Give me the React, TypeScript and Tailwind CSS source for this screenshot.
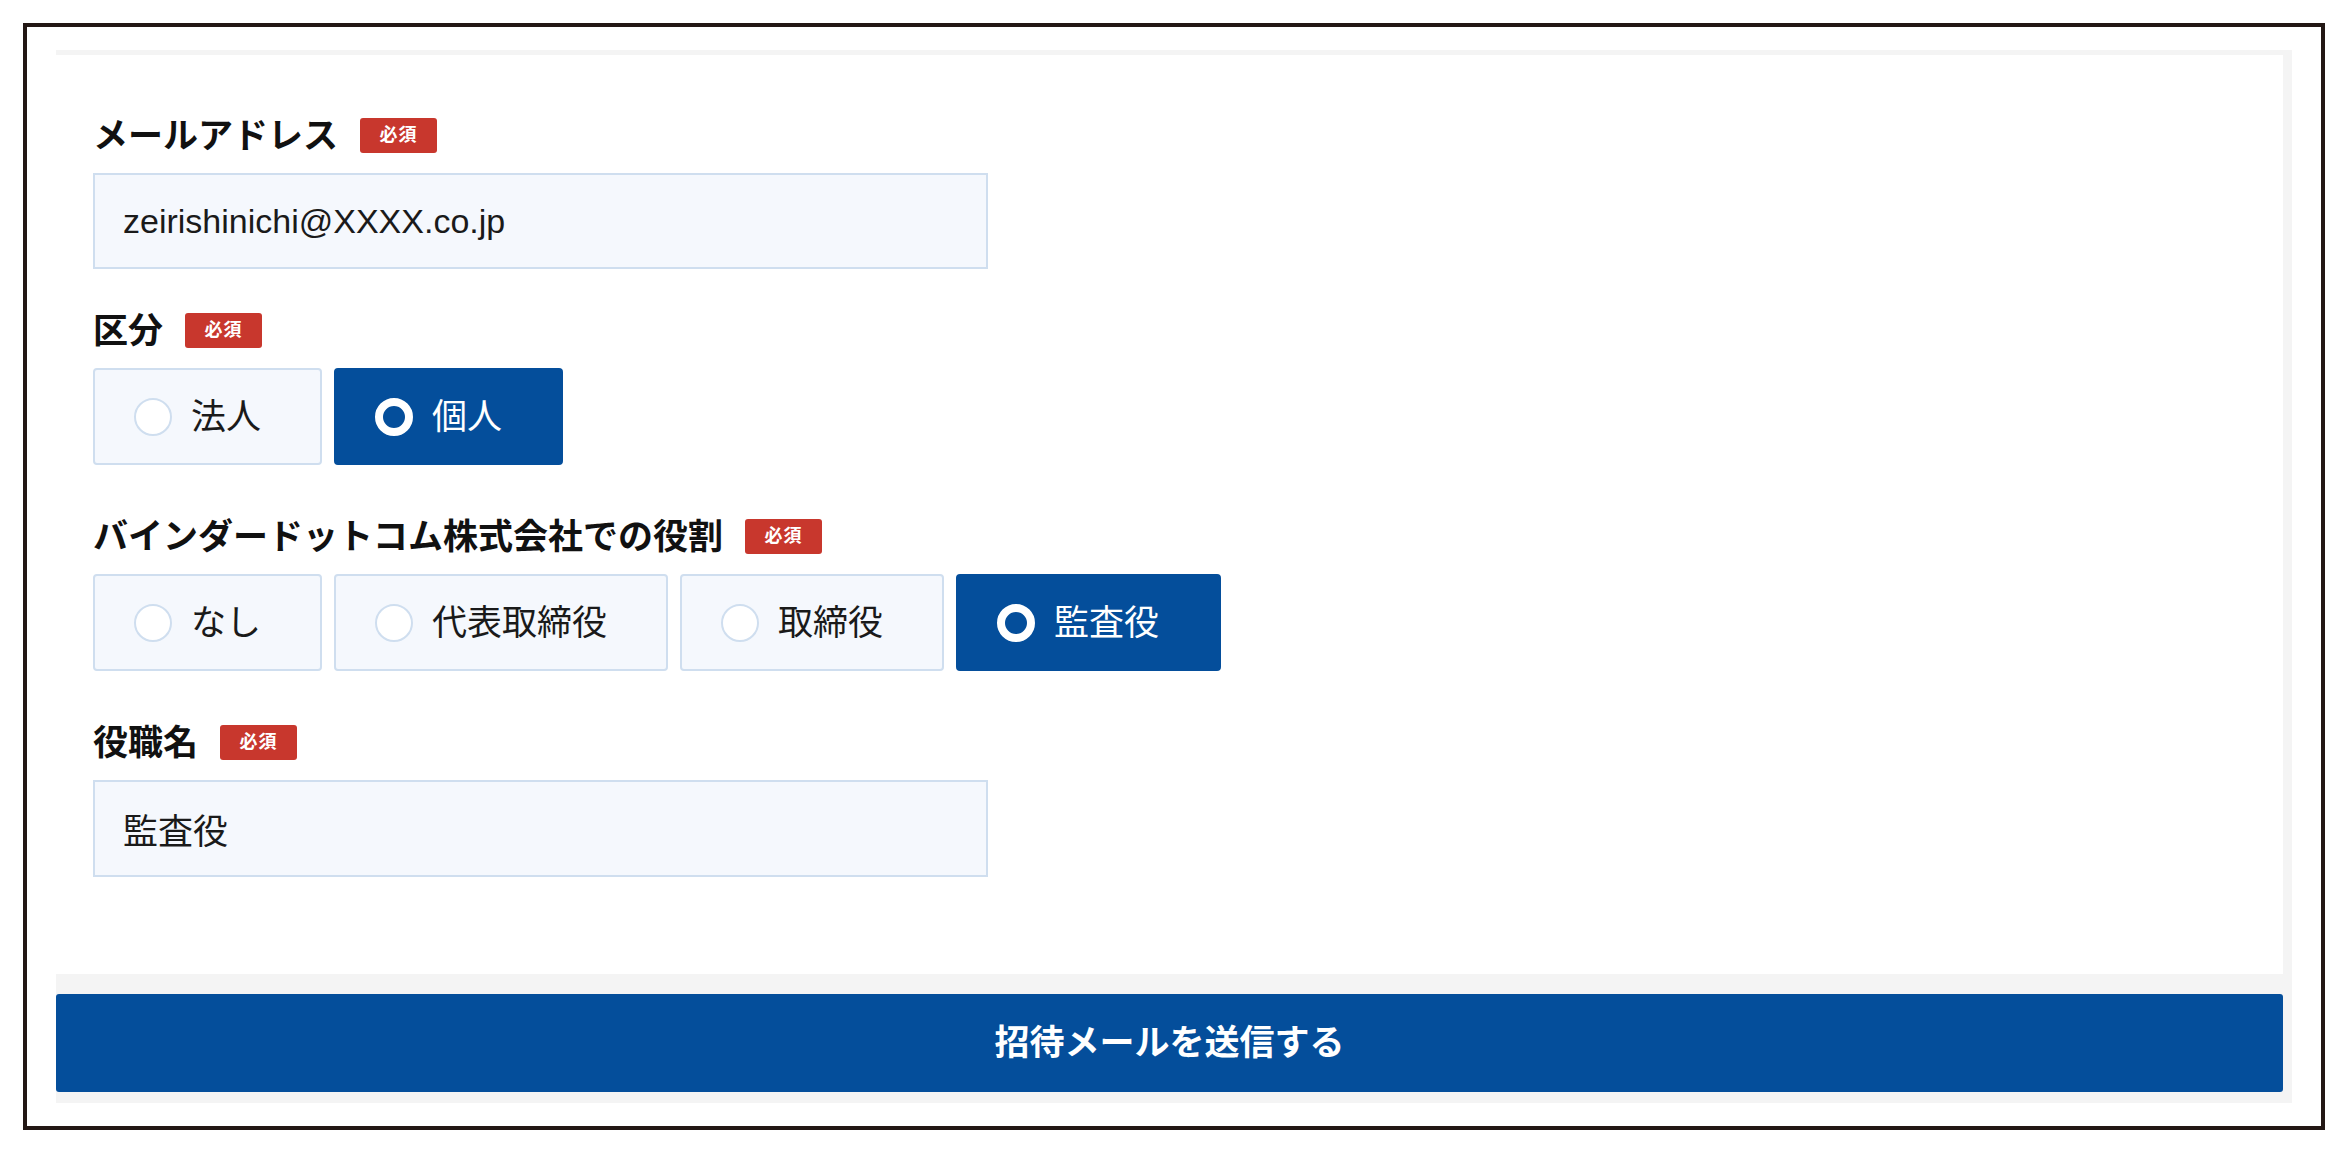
import { useState } from 'react'

type Option = { id: string; label: string; width: string }

const kubunOptions: Option[] = [
  { id: 'corp', label: '法人', width: 'w-[229px]' },
  { id: 'person', label: '個人', width: 'w-[229px]' },
]

const roleOptions: Option[] = [
  { id: 'none', label: 'なし', width: 'w-[229px]' },
  { id: 'ceo', label: '代表取締役', width: 'w-[334px]' },
  { id: 'director', label: '取締役', width: 'w-[264px]' },
  { id: 'auditor', label: '監査役', width: 'w-[265px]' },
]

function Required() {
  return (
    <span className="ml-[22px] inline-flex h-[35px] w-[77px] items-center justify-center rounded-[3px] bg-[#c8372d] text-[18px] font-bold tracking-[1px] text-white">
      必須
    </span>
  )
}

function FieldLabel({ children }: { children: React.ReactNode }) {
  return (
    <div className="flex h-[35px] items-center">
      <span className="text-[35px] font-bold leading-none text-[#111]">{children}</span>
      <Required />
    </div>
  )
}

function RadioGroup({
  options,
  value,
  onChange,
}: {
  options: Option[]
  value: string
  onChange: (id: string) => void
}) {
  return (
    <div className="mt-[20px] flex gap-[12px]">
      {options.map((opt) => {
        const active = opt.id === value
        return (
          <button
            key={opt.id}
            type="button"
            onClick={() => onChange(opt.id)}
            className={`flex h-[97px] items-center gap-[19px] rounded-[4px] border-2 pl-[39px] text-left ${opt.width} ${
              active ? 'border-[#044e9b] bg-[#044e9b] text-white' : 'border-[#cfdeef] bg-[#f5f8fd] text-[#1a1a1a]'
            }`}
          >
            <span
              className={`h-[38px] w-[38px] shrink-0 rounded-full ${
                active ? 'border-[8px] border-white bg-[#044e9b]' : 'border-2 border-[#cfdeef] bg-white'
              }`}
            />
            <span className="text-[35px] leading-none">{opt.label}</span>
          </button>
        )
      })}
    </div>
  )
}

export default function App() {
  const [email, setEmail] = useState('zeirishinichi@XXXX.co.jp')
  const [kubun, setKubun] = useState('person')
  const [role, setRole] = useState('auditor')
  const [title, setTitle] = useState('監査役')

  return (
    <div className="h-screen bg-white p-[23px] font-['Liberation_Sans','Noto_Sans_CJK_JP',sans-serif]">
      <div className="flex h-full flex-col border-4 border-[#231815] px-[29px] py-[23px]">
        <div className="flex flex-1 flex-col bg-[#f4f4f4] pb-[11px] pr-[9px] pt-[5px]">
          {/* Form body */}
          <div className="flex-1 bg-white pl-[37px] pt-[63px]">
            <FieldLabel>メールアドレス</FieldLabel>
            <input
              value={email}
              onChange={(e) => setEmail(e.target.value)}
              className="mt-[20px] block h-[96px] w-[895px] border-2 border-[#cfdeef] bg-[#f5f8fd] pl-[28px] text-[34px] text-[#1a1a1a] outline-none"
            />

            <div className="mt-[44px]">
              <FieldLabel>区分</FieldLabel>
            </div>
            <RadioGroup options={kubunOptions} value={kubun} onChange={setKubun} />

            <div className="mt-[54px]">
              <FieldLabel>バインダードットコム株式会社での役割</FieldLabel>
            </div>
            <RadioGroup options={roleOptions} value={role} onChange={setRole} />

            <div className="mt-[54px]">
              <FieldLabel>役職名</FieldLabel>
            </div>
            <input
              value={title}
              onChange={(e) => setTitle(e.target.value)}
              className="mt-[20px] block h-[97px] w-[895px] border-2 border-[#cfdeef] bg-[#f5f8fd] pl-[28px] text-[35px] text-[#1a1a1a] outline-none"
            />
          </div>

          {/* Submit */}
          <button
            type="button"
            className="mt-[20px] h-[98px] w-full rounded-[3px] bg-[#044e9b] text-[35px] font-bold text-white"
          >
            招待メールを送信する
          </button>
        </div>
      </div>
    </div>
  )
}
